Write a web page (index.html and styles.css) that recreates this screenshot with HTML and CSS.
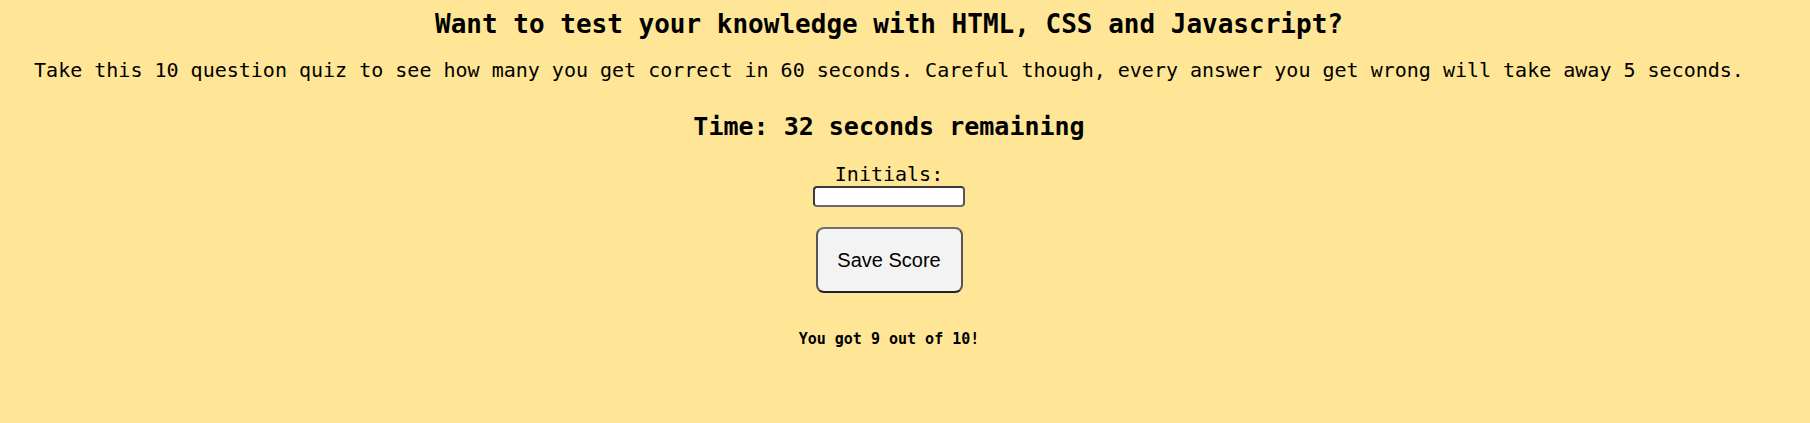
FILE: index.html
```html
<!DOCTYPE html>
<html lang="en">
<head>
<meta charset="utf-8">
<title>Code Quiz</title>
<link rel="stylesheet" href="styles.css">
</head>
<body>
<main class="page">
  <h1 class="title">Want to test your knowledge with HTML, CSS and Javascript?</h1>
  <p class="intro">Take this 10 question quiz to see how many you get correct in 60 seconds. Careful though, every answer you get wrong will take away 5 seconds.</p>
  <h2 class="timer">Time: 32 seconds remaining</h2>
  <form class="score-form">
    <label class="label" for="initials">Initials:</label>
    <input class="input" id="initials" type="text">
    <button class="save" type="button">Save Score</button>
  </form>
  <p class="result">You got 9 out of 10!</p>
</main>
</body>
</html>
```

FILE: styles.css
```css
html, body {
  margin: 0;
  padding: 0;
  background: #ffe696;
}
body {
  font-family: "DejaVu Sans Mono", monospace;
  color: #000;
}
.page {
  width: 1778px;
  text-align: center;
  display: flex;
  flex-direction: column;
  align-items: center;
}
.title {
  margin: 9px 0 0;
  font-size: 26px;
  line-height: 30px;
  font-weight: bold;
}
.intro {
  margin: 19px 0 0;
  font-size: 20px;
  line-height: 24px;
}
.timer {
  margin: 30px 0 0;
  font-size: 25px;
  line-height: 30px;
  font-weight: bold;
}
.score-form {
  margin: 20px 0 0;
  display: flex;
  flex-direction: column;
  align-items: center;
}
.label {
  font-size: 20px;
  line-height: 24px;
}
.input {
  box-sizing: border-box;
  width: 152px;
  height: 21px;
  margin: 0;
  padding: 0 3px;
  background: #fff;
  border: 2px solid #3a3a3a;
  border-bottom-color: #6a6a6a;
  border-right-color: #555;
  border-radius: 4px;
}
.save {
  box-sizing: border-box;
  margin: 20px 0 0;
  width: 147px;
  height: 66px;
  padding: 0;
  background: #f3f3f3;
  border: 2px solid #555;
  border-top-color: #6e6e6e;
  border-bottom-color: #222;
  border-radius: 8px;
  font-family: "Liberation Sans", Arial, sans-serif;
  font-size: 20px;
  color: #000;
}
.result {
  margin: 37px 0 0;
  font-size: 15px;
  line-height: 18px;
  font-weight: bold;
}
```
